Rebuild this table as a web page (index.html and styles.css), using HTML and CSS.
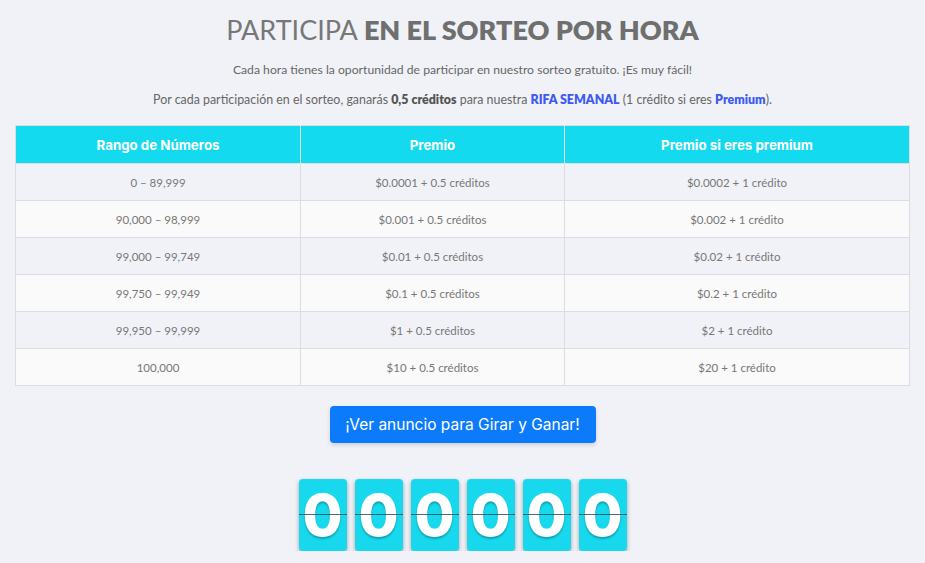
FILE: index.html
```html
<!DOCTYPE html>
<html lang="es">
<head>
<meta charset="utf-8">
<title>Sorteo por hora</title>
<link rel="stylesheet" href="styles.css">
</head>
<body>
<main class="page">
  <h1 class="title">PARTICIPA <strong>EN EL SORTEO POR HORA</strong></h1>
  <p class="lead">Cada hora tienes la oportunidad de participar en nuestro sorteo gratuito. ¡Es muy fácil!</p>
  <p class="lead second">Por cada participación en el sorteo, ganarás <b class="dark">0,5 créditos</b> para nuestra <b class="blue">RIFA SEMANAL</b> (1 crédito si eres <b class="blue">Premium</b>).</p>

  <table class="prizes">
    <thead>
      <tr><th class="c1">Rango de Números</th><th class="c2">Premio</th><th class="c3">Premio si eres premium</th></tr>
    </thead>
    <tbody>
      <tr><td>0 – 89,999</td><td>$0.0001 + 0.5 créditos</td><td>$0.0002 + 1 crédito</td></tr>
      <tr><td>90,000 – 98,999</td><td>$0.001 + 0.5 créditos</td><td>$0.002 + 1 crédito</td></tr>
      <tr><td>99,000 – 99,749</td><td>$0.01 + 0.5 créditos</td><td>$0.02 + 1 crédito</td></tr>
      <tr><td>99,750 – 99,949</td><td>$0.1 + 0.5 créditos</td><td>$0.2 + 1 crédito</td></tr>
      <tr><td>99,950 – 99,999</td><td>$1 + 0.5 créditos</td><td>$2 + 1 crédito</td></tr>
      <tr><td>100,000</td><td>$10 + 0.5 créditos</td><td>$20 + 1 crédito</td></tr>
    </tbody>
  </table>

  <div class="actions">
    <button class="btn" type="button">¡Ver anuncio para Girar y Ganar!</button>
  </div>

  <div class="counter">
    <div class="digit"><span>0</span></div>
    <div class="digit"><span>0</span></div>
    <div class="digit"><span>0</span></div>
    <div class="digit"><span>0</span></div>
    <div class="digit"><span>0</span></div>
    <div class="digit"><span>0</span></div>
  </div>
</main>
</body>
</html>
```

FILE: styles.css
```css
* { box-sizing: border-box; }
html, body { margin: 0; padding: 0; }
body {
  background: #f1f2f7;
  font-family: "Lato", "Noto Sans", sans-serif;
  color: #666;
}
.page {
  padding: 13px 15px 0;
}
.title {
  margin: 0;
  text-align: center;
  font-size: 27px;
  line-height: 34px;
  font-weight: 400;
  color: #777;
}
.title strong { font-weight: 800; color: #6f6f6f; }
.lead {
  margin: 15px 0 0;
  text-align: center;
  font-size: 12.2px;
  line-height: 16px;
  color: #666;
}
.lead.second { margin-top: 14px; font-size: 12.4px; }
.dark { color: #555; font-weight: 800; }
.blue { color: #3d5af1; font-weight: 800; }

.prizes {
  margin-top: 17px;
  width: 100%;
  border-collapse: collapse;
  border: 1px solid #dcdde2;
  font-size: 11.5px;
  color: #777;
}
.prizes th {
  background: #14daef;
  color: #fff;
  font-family: "Inter", "Noto Sans", sans-serif;
  font-weight: 700;
  font-size: 13.3px;
  height: 38px;
  padding: 0 8px;
  border-left: 1px solid #e6f3f5;
}
.prizes th:first-child { border-left: none; }
.prizes .c1 { width: 285px; }
.prizes .c2 { width: 264px; }
.prizes td {
  height: 37px;
  text-align: center;
  border-top: 1px solid #dcdde2;
  border-left: 1px solid #dcdde2;
  padding: 0 8px;
}
.prizes tbody tr:nth-child(odd) { background: #f1f2f7; }
.prizes tbody tr:nth-child(even) { background: #fafafa; }

.actions {
  display: flex;
  justify-content: center;
  margin-top: 20px;
}
.btn {
  width: 266px;
  height: 37px;
  border: none;
  border-radius: 4px;
  background: #0b7bfb;
  color: #fff;
  font-family: "Inter", "Noto Sans", sans-serif;
  font-size: 15.5px;
  font-weight: 400;
  box-shadow: 0 2px 4px rgba(0,0,0,0.15);
  padding: 0;
}
.counter {
  display: flex;
  justify-content: center;
  gap: 8px;
  margin-top: 36px;
}
.digit {
  position: relative;
  width: 48px;
  height: 72px;
  background: #17d8ec;
  border-radius: 4px;
  box-shadow: 0 2px 4px rgba(0,0,0,0.35);
  display: flex;
  align-items: center;
  justify-content: center;
}
.digit span {
  font-family: "Inter", "Noto Sans", sans-serif;
  font-weight: 800;
  font-size: 58px;
  line-height: 1;
  color: #fff;
  text-shadow: 0 2px 2px rgba(0,0,0,0.25);
}
.digit::after {
  content: "";
  position: absolute;
  left: 0;
  right: 0;
  top: 35px;
  height: 1px;
  background: rgba(20,60,70,0.75);
}
```
